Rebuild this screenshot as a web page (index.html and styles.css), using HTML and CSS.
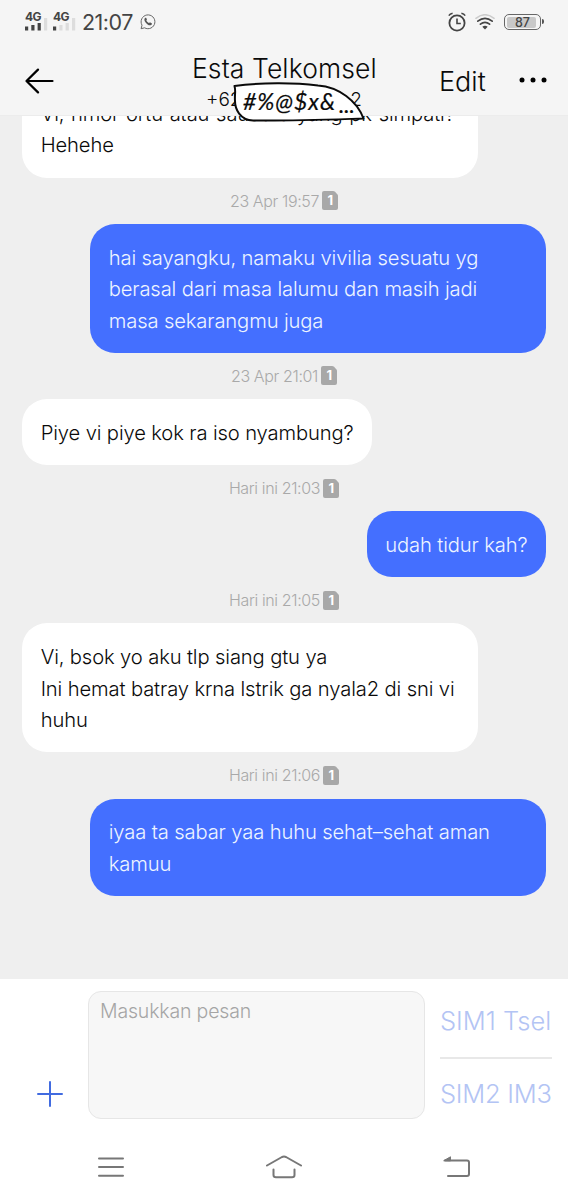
FILE: index.html
```
<!DOCTYPE html>
<html lang="id">
<head>
<meta charset="utf-8">
<title>Esta Telkomsel</title>
<link rel="stylesheet" href="styles.css">
</head>
<body>
<svg class="defs" width="0" height="0" aria-hidden="true">
  <symbol id="sim" viewBox="0 0 16 19">
    <path d="M2 0H11Q12.200 0 13 .8L15.300 3.200Q16 4 16 5V17a2 2 0 0 1-2 2H2a2 2 0 0 1-2-2V2a2 2 0 0 1 2-2z"/>
  </symbol>
</svg>
<div class="screen">
  <header class="top">
    <div class="status">
      <div class="signal"><span>4G</span>
        <svg width="23" height="13" viewBox="0 0 23 13"><g fill="#444"><rect x="0" y="8.5" width="3.2" height="4"/><rect x="6.3" y="7" width="3.2" height="5.5"/><rect x="12.6" y="5" width="3.2" height="7.5"/></g><rect x="19" y="0" width="3.2" height="12.5" fill="#ddd"/></svg>
      </div>
      <div class="signal second"><span>4G</span>
        <svg width="23" height="13" viewBox="0 0 23 13"><rect x="0" y="8.5" width="3.2" height="4" fill="#444"/><g fill="#ddd"><rect x="6.3" y="7" width="3.2" height="5.5"/><rect x="12.6" y="5" width="3.2" height="7.5"/><rect x="19" y="0" width="3.2" height="12.5"/></g></svg>
      </div>
      <span class="clock">21:07</span>
      <svg class="whatsapp" width="16" height="16" viewBox="0 0 16 16"><path d="M1.1 14.7l.9-3.5A6.9 6.9 0 1 1 4.6 13.8z" fill="none" stroke="#666" stroke-width="1"/><path d="M5 4.1c.5-.6 1.1-.4 1.3 0l.6 1.4c.1.4-.3.8-.6 1.1.6 1.2 1.5 2 2.8 2.6.4-.4.7-1 1.1-.8l1.5.8c.5.3.1 1.4-.5 1.8-1 .6-2.300 .3-3.600-.6C6.100 9.300 4.900 7.900 4.500 6.500c-.2-.9 0-1.900.5-2.400z" fill="#555"/></svg>
      <div class="status-right">
        <svg width="18" height="20" viewBox="0 0 18 20" fill="none" stroke="#444"><circle cx="9" cy="11" r="7.600" stroke-width="1.800"/><path d="M9 6.500V11.500H12.800" stroke-width="1.600"/><path d="M.8 3.700Q2 1.800 4.600 1.200M17.200 3.700Q16 1.800 13.400 1.200" stroke-width="1.500"/></svg>
        <svg width="20" height="16" viewBox="0 0 20 16" fill="none" stroke-linecap="round"><path d="M.9 4.300Q10-2.900 19.100 4.300" stroke="#ccc" stroke-width="1.500"/><path d="M2.800 7.200Q10 1.400 17.200 7.200M5.400 10.200Q10 6.500 14.600 10.200" stroke="#444" stroke-width="1.700"/><path d="M7.300 12.700Q10 10.700 12.700 12.700L10 15.600z" fill="#444"/></svg>
        <div class="battery"><span>87</span></div>
      </div>
    </div>
    <div class="bar">
      <svg class="back" width="29" height="26" viewBox="0 0 29 26" fill="none" stroke="#000" stroke-width="2.200" stroke-linecap="round" stroke-linejoin="round"><path d="M27.500 13H1.500M13 1.600L1.500 13L13 24.400"/></svg>
      <div class="contact">
        <div class="name">Esta Telkomsel</div>
        <div class="number"><span>+62</span><span>2</span></div>
        <svg class="censor" width="134" height="42" viewBox="0 0 134 42"><path d="M3.500 5C30 1.500 63 1.500 87 4.500C108 6 126 20 132.500 37.500C100 38.500 60 40 22 39.500C9 39 4 28 4 20C3.500 13 5 10 3.500 5z" fill="#fff" stroke="#0a0a0a" stroke-width="2" stroke-linejoin="round"/><text class="scribble" x="12" y="28.500" textLength="92">#%@$x&amp;</text><text class="scribble" x="108" y="32" textLength="16">...</text></svg>
      </div>
      <span class="edit">Edit</span>
      <svg class="more" width="28" height="6" viewBox="0 0 28 6"><circle cx="3" cy="3" r="2.500"/><circle cx="14" cy="3" r="2.500"/><circle cx="25" cy="3" r="2.500"/></svg>
    </div>
  </header>

  <main class="thread">
    <div class="bubble in wide"><span class="first">Vi, nmor ortu atau saudara yang pk simpati?</span><br>Hehehe</div>
    <div class="stamp">23 Apr 19:57<span class="sim"><svg width="16" height="19"><use href="#sim"/></svg><b>1</b></span></div>
    <div class="bubble out wide">hai sayangku, namaku vivilia sesuatu yg<br>berasal dari masa lalumu dan masih jadi<br>masa sekarangmu juga</div>
    <div class="stamp">23 Apr 21:01<span class="sim"><svg width="16" height="19"><use href="#sim"/></svg><b>1</b></span></div>
    <div class="bubble in">Piye vi piye kok ra iso nyambung?</div>
    <div class="stamp">Hari ini 21:03<span class="sim"><svg width="16" height="19"><use href="#sim"/></svg><b>1</b></span></div>
    <div class="bubble out">udah tidur kah?</div>
    <div class="stamp">Hari ini 21:05<span class="sim"><svg width="16" height="19"><use href="#sim"/></svg><b>1</b></span></div>
    <div class="bubble in wide">Vi, bsok yo aku tlp siang gtu ya<br>Ini hemat batray krna lstrik ga nyala2 di sni vi<br>huhu</div>
    <div class="stamp">Hari ini 21:06<span class="sim"><svg width="16" height="19"><use href="#sim"/></svg><b>1</b></span></div>
    <div class="bubble out wide">iyaa ta sabar yaa huhu sehat–sehat aman<br>kamuu</div>
  </main>

  <section class="composer">
    <svg class="plus" width="26" height="26" viewBox="0 0 26 26" stroke="#416be0" stroke-width="2" stroke-linecap="round"><path d="M1 13H25M13 1V25"/></svg>
    <div class="field">Masukkan pesan</div>
    <div class="sims"><div class="send one">SIM1 Tsel</div><div class="send two">SIM2 IM3</div></div>
  </section>

  <nav class="nav">
    <svg width="26" height="22" viewBox="0 0 26 22" stroke="#777" stroke-width="2" stroke-linecap="round"><path d="M1 2.500H25M1 11H25M1 19.700H25"/></svg>
    <svg width="38" height="24" viewBox="0 0 38 24" fill="none" stroke="#777" stroke-width="2" stroke-linecap="round" stroke-linejoin="round"><path d="M2 10.500L17 2Q19 1 21 2L36 10.500M8.500 14.500V20Q8.500 22.300 11 22.300H27Q29.500 22.300 29.500 20V14.500"/></svg>
    <svg width="28" height="22" viewBox="0 0 28 22" fill="none" stroke="#777" stroke-width="2" stroke-linecap="round" stroke-linejoin="round"><path d="M2 4.500H24Q26 4.500 26 6.500V18Q26 20 24 20H5"/><path d="M1 4.500L7.500 .8V4.500z" fill="#777" stroke-width="1"/></svg>
  </nav>
</div>
</body>
</html>
```
FILE: styles.css
```
* { box-sizing: border-box; }
body { margin: 0; font-family: Inter, "Liberation Sans", sans-serif; font-weight: 300; color: #0a0a0a; background: #fff; }
svg { display: block; flex: none; }
.defs { position: absolute; }
.screen { width: 568px; height: 1200px; display: flex; flex-direction: column; overflow: hidden; }

.top { height: 116px; flex: none; background: #f5f5f5; border-bottom: 1px solid #ececec; position: relative; z-index: 1; }
.status { height: 44px; display: flex; padding-left: 25px; color: #444; }
.signal { width: 23px; height: 20px; margin-top: 11px; display: grid; align-items: end; }
.signal span, .signal svg { grid-area: 1 / 1; }
.signal span { align-self: start; font-size: 12px; line-height: 12px; font-weight: 700; letter-spacing: -0.5px; }
.signal.second { margin-left: 5px; }
.clock { font-size: 21.500px; line-height: 24px; margin: 10px 0 0 6px; width: 52px; letter-spacing: -0.5px; font-weight: 400; }
.whatsapp { margin: 14px 0 0 6px; }
.status-right { margin: 12px 25px 0 auto; display: flex; align-items: center; height: 20px; gap: 9px; }
.battery { width: 37px; height: 16px; margin-right: 2px; border: 1.500px solid #666; border-radius: 5px; padding: 1.500px 4px 1.500px 2px; position: relative; }
.battery::after { content: ""; position: absolute; right: -4px; top: 4px; width: 2px; height: 5px; background: #555; border-radius: 0 2px 2px 0; }
.battery span { display: block; height: 100%; background: #c8c8c8; border-radius: 2px; text-align: center; font-size: 12.500px; line-height: 11.500px; font-weight: 500; padding-left: 2px; }

.bar { height: 71px; display: flex; align-items: flex-start; padding: 0 21px 0 25px; }
.back { margin-top: 24px; }
.contact { width: 185px; margin: 8px 0 0 138px; position: relative; }
.name { font-size: 26.500px; line-height: 32px; white-space: nowrap; letter-spacing: 0.1px; }
.number { display: flex; justify-content: space-between; font-size: 19px; line-height: 24px; padding: 4px 15px 0 14px; }
.censor { position: absolute; left: 39px; top: 29px; overflow: visible; }
.scribble { font: italic 400 23px Lato, sans-serif; fill: #0a0a0a; stroke: #0a0a0a; stroke-width: .2px; }
.edit { font-size: 27px; line-height: 32px; margin: 22px 0 0 62px; width: 49px; }
.more { margin: 33px 0 0 auto; }

.thread { flex: none; height: 863px; background: #efefef; display: flex; flex-direction: column; justify-content: flex-end; padding: 0 22px 83px; overflow: hidden; }
.bubble { flex: none; padding: 17.750px 18.500px 16.750px 18.700px; border-radius: 25px; font-size: 20.200px; line-height: 31.500px; letter-spacing: -0.130px; font-weight: 330; white-space: nowrap; }
.first { word-spacing: 1.200px; }
.in { align-self: flex-start; background: #fff; }
.out { align-self: flex-end; background: #446fff; color: #eef5ff; }
.wide { width: 456px; }
.stamp { flex: none; height: 46.200px; display: flex; justify-content: center; align-items: center; gap: 3px; font-size: 16px; letter-spacing: -0.370px; color: #a9a9a9; white-space: nowrap; }
.sim { display: grid; place-items: center; }
.sim svg, .sim b { grid-area: 1 / 1; }
.sim svg { fill: #a8a8a8; }
.sim b { color: #fff; font-size: 13px; line-height: 19px; font-weight: 700; }

.composer { height: 156px; flex: none; display: flex; padding: 12px 16px 0 37px; }
.plus { margin-top: 90px; }
.field { width: 337px; height: 128px; margin-left: 25px; border: 1.500px solid #e6e6e6; border-radius: 13px; background: #f7f7f7; color: #a5a5a5; font-size: 19.500px; letter-spacing: -0.170px; line-height: 24px; padding: 7px 11px; }
.sims { width: 112px; margin-left: 15px; }
.send { font-size: 25.500px; line-height: 32px; color: #b3c4f4; white-space: nowrap; }
.one { height: 68px; padding-top: 14px; border-bottom: 2px solid #e8e8e8; }
.two { padding-top: 19px; letter-spacing: -0.250px; }

.nav { height: 65px; display: flex; align-items: center; justify-content: space-between; padding: 0 97px 1px 98px; }
```
